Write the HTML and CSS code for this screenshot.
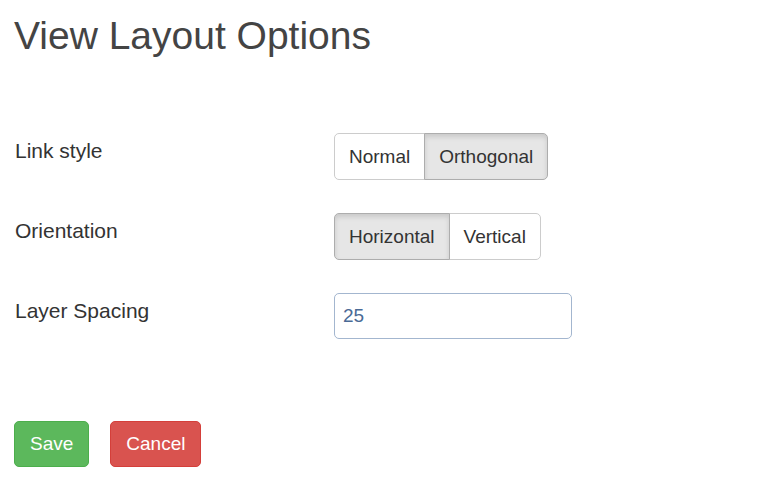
FILE: index.html
```html
<!DOCTYPE html>
<html lang="en">
<head>
    <meta charset="UTF-8">
    <meta name="viewport" content="width=device-width, initial-scale=1.0">
    <title>View Layout Options</title>
    <link rel="stylesheet" href="styles.css">
</head>
<body>

<div class="options-container">
    <h1>View Layout Options</h1>

    <form class="options-form" onsubmit="return false;">
        <div class="form-row">
            <label class="form-label">Link style</label>
            <div class="btn-group" data-name="linkStyle">
                <button type="button" class="btn-toggle">Normal</button>
                <button type="button" class="btn-toggle active">Orthogonal</button>
            </div>
        </div>

        <div class="form-row">
            <label class="form-label">Orientation</label>
            <div class="btn-group" data-name="orientation">
                <button type="button" class="btn-toggle active">Horizontal</button>
                <button type="button" class="btn-toggle">Vertical</button>
            </div>
        </div>

        <div class="form-row">
            <label class="form-label" for="layerSpacing">Layer Spacing</label>
            <input type="text" id="layerSpacing" class="form-input" value="25">
        </div>

        <div class="form-actions">
            <button type="button" class="btn btn-save">Save</button>
            <button type="button" class="btn btn-cancel">Cancel</button>
        </div>
    </form>
</div>

<script>
    // Toggle the active button inside each group
    document.querySelectorAll('.btn-group').forEach(group => {
        group.addEventListener('click', e => {
            if (!e.target.classList.contains('btn-toggle')) return;
            group.querySelectorAll('.btn-toggle').forEach(b => b.classList.remove('active'));
            e.target.classList.add('active');
        });
    });
</script>

</body>
</html>
```

FILE: styles.css
```css
body {
    margin: 0;
    font-family: "Liberation Sans", Arial, Helvetica, sans-serif;
    color: #333;
    background: #fff;
}
.options-container {
    padding: 15px 14px;
}
h1 {
    margin: 0;
    font-size: 39px;
    font-weight: normal;
    line-height: 1.1;
    color: #444;
}
.options-form {
    margin-top: 75px;
    display: flex;
    flex-direction: column;
    gap: 33px;
}
.form-row {
    display: grid;
    grid-template-columns: 320px 1fr;
    align-items: start;
}
.form-label {
    font-size: 21px;
    line-height: 30px;
    padding-top: 3px;
    padding-left: 1px;
}
.btn-group {
    display: flex;
    justify-self: start;
}
.btn-toggle {
    font-family: inherit;
    font-size: 19px;
    line-height: 26px;
    padding: 10px 14px 9px;
    color: #333;
    background: #fff;
    border: 1px solid #ccc;
    cursor: pointer;
}
.btn-toggle:first-child {
    border-radius: 5px 0 0 5px;
}
.btn-toggle:last-child {
    border-radius: 0 5px 5px 0;
    margin-left: -1px;
}
.btn-toggle.active {
    background: #e6e6e6;
    border-color: #adadad;
    box-shadow: inset 0 3px 5px rgba(0, 0, 0, 0.125);
    position: relative;
}
.form-input {
    width: 238px;
    box-sizing: border-box;
    font-family: inherit;
    font-size: 19px;
    line-height: 26px;
    padding: 9px 8px;
    color: #4a6a96;
    border: 1px solid #a3b6cf;
    border-radius: 5px;
    outline: none;
}
.form-actions {
    margin-top: 49px;
    display: flex;
    gap: 21px;
}
.btn {
    font-family: inherit;
    font-size: 19px;
    line-height: 26px;
    padding: 9px 15px;
    color: #fff;
    border: 1px solid transparent;
    border-radius: 5px;
    cursor: pointer;
}
.btn-save {
    background: #5cb85c;
    border-color: #4cae4c;
}
.btn-cancel {
    background: #d9534f;
    border-color: #d43f3a;
}
```
